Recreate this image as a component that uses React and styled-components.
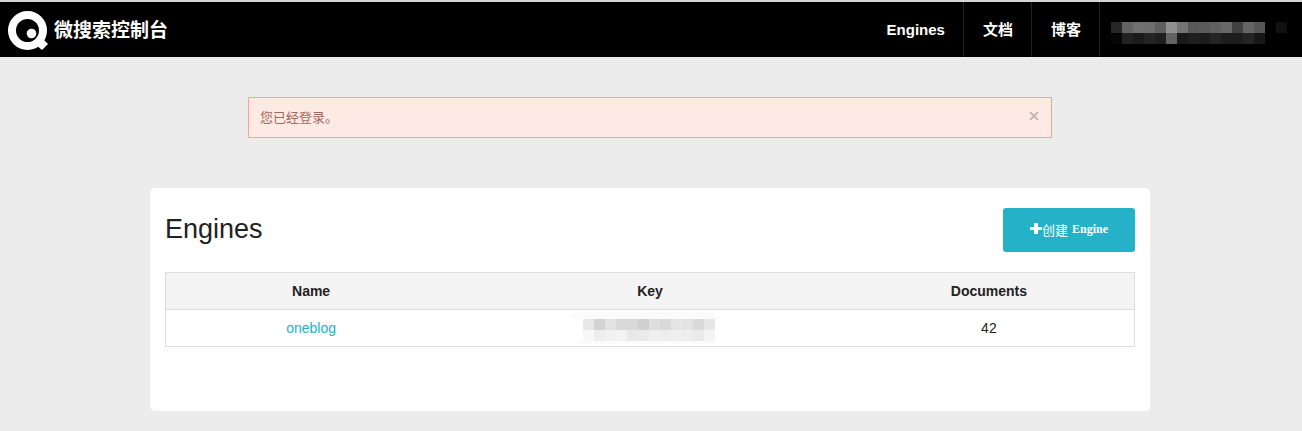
import React from 'react';
import styled, { createGlobalStyle } from 'styled-components';

const GlobalStyle = createGlobalStyle`
  *, *::before, *::after { box-sizing: border-box; }
  body {
    margin: 0;
    background: #ececec;
    color: #222;
    font-family: "Liberation Sans", "Noto Sans CJK SC", sans-serif;
    font-size: 14px;
    line-height: 20px;
  }
`;

const TopBar = styled.header`
  display: flex;
  justify-content: space-between;
  border-top: 2px solid #d4d6d6;
  background: #000;
  color: #fff;
`;

const Brand = styled.a`
  display: flex;
  align-items: center;
  gap: 4px;
  padding: 2px 0 0 8px;
  color: #fff;
  font-size: 19px;
  font-weight: 700;
  text-decoration: none;
`;

const Nav = styled.nav`
  display: flex;
`;

const NavLink = styled.a`
  display: flex;
  align-items: center;
  height: 55px;
  padding: 0 18px 0 19px;
  border-right: 1px solid #222;
  color: #fff;
  font-size: 15px;
  font-weight: 700;
  text-decoration: none;
`;

const Account = styled.div`
  display: flex;
  align-items: center;
  padding: 7px 15px 0 11px;
`;

const Main = styled.main`
  padding: 40px 2px 20px 0;
`;

const Alert = styled.div`
  display: flex;
  justify-content: space-between;
  align-items: center;
  max-width: 804px;
  margin: 0 auto 50px;
  padding: 10px 11px;
  border: 1px solid #f9a592;
  background: #fdeae4;
  color: #a3695b;
  font-size: 13px;
  line-height: 19px;
`;

const CloseButton = styled.button`
  display: flex;
  padding: 0 1px 4px;
  border: 0;
  background: none;
  color: #c6b7b2;
  cursor: pointer;
`;

const Card = styled.section`
  max-width: 1000px;
  margin: 0 auto;
  padding: 20px 15px 64px;
  border-radius: 5px;
  background: #fff;
`;

const CardHeader = styled.div`
  display: flex;
  justify-content: space-between;
  margin-bottom: 20px;
`;

const Title = styled.h1`
  margin: 0;
  font-size: 27px;
  font-weight: 400;
  line-height: 42px;
`;

const CreateButton = styled.button`
  display: flex;
  justify-content: center;
  align-items: center;
  width: 132px;
  height: 44px;
  padding: 0 0 2px;
  border: 0;
  border-radius: 3px;
  background: #25b1c7;
  color: #fff;
  font-family: "Liberation Serif", "Noto Sans CJK SC", serif;
  font-size: 13px;
  cursor: pointer;
`;

const Strong = styled.strong`
  margin-left: 4px;
  font-size: 12px;
`;

const Table = styled.table`
  width: 100%;
  border: 1px solid #ddd;
  border-collapse: collapse;
  table-layout: fixed;
  text-align: center;
`;

const HeadCell = styled.th`
  width: ${({ $width }) => $width};
  height: 37px;
  padding: 0;
  border-bottom: 1px solid #ddd;
  background: #f4f4f4;
`;

const Cell = styled.td`
  height: 37px;
  padding: 0;
`;

const EngineLink = styled.a`
  color: #25b1c7;
  text-decoration: none;
`;

const MosaicSvg = styled.svg`
  display: block;
  margin: 0 auto;
`;

const ACCOUNT_TILES = [
  ['#272727', '#636363', '#707070', '#6e6e6e', '#5f5f5f', '#8f8f8f', '#747474', '#595959', '#5b5b5b', '#616161', '#686868', '#414141', '#656565', '#565656', '#000', '#111'],
  ['#060606', '#222', '#1b1b1b', '#242424', '#1e1e1e', '#626262', '#191919', '#1f1f1f', '#1c1c1c', '#242424', '#1d1d1d', '#1d1d1d', '#242424', '#171717'],
];

const KEY_TILES = [
  ['#e8e8e8', '#d3d3d3', '#e3e3e3', '#d9d9d9', '#d9d9d9', '#d0d0d0', '#dedede', '#d9d9d9', '#e5e5e5', '#e3e3e3', '#dadada', '#e7e7e7'],
  ['#f7f7f7', '#eee', '#f1f1f1', '#f2f2f2', '#e8e8e8', '#eaeaea', '#efefef', '#ededed', '#efefef', '#ededed', '#eaeaea', '#f4f4f4'],
];

function Tiles({ tiles, left = 0, top = 0 }) {
  return tiles.map((row, y) =>
    row.map((fill, x) => (
      <rect key={`${x}-${y}`} x={left + x * 11} y={top + y * 11} width="11" height="11" fill={fill} />
    ))
  );
}

function MaskedAccount() {
  return (
    <MosaicSvg width="176" height="22" role="img" aria-label="Account" shapeRendering="crispEdges">
      <Tiles tiles={ACCOUNT_TILES} />
    </MosaicSvg>
  );
}

function MaskedKey() {
  return (
    <MosaicSvg width="166" height="32" role="img" aria-label="Key" shapeRendering="crispEdges">
      <path d="M0 7 Q6 0 14 0 H141 Q149 0 154 7 Z M5 29 H151 Q147 32 141 32 H16 Q9 32 5 29 Z" fill="#fbfbfb" />
      <Tiles tiles={KEY_TILES} left={16} top={7} />
    </MosaicSvg>
  );
}

function Logo() {
  return (
    <svg width="42" height="40" viewBox="0 0 42 40" aria-hidden="true">
      <circle cx="19.5" cy="19.5" r="15.5" fill="none" stroke="#fff" strokeWidth="8" />
      <path d="M30 28 L35.500 28.500 L40 33 L34 39 L28 34 Z" fill="#fff" />
      <circle cx="23.5" cy="22.5" r="4.8" fill="#fff" />
    </svg>
  );
}

export default function App() {
  return (
    <>
      <GlobalStyle />
      <TopBar>
        <Brand href="#">
          <Logo />
          微搜索控制台
        </Brand>
        <Nav>
          <NavLink href="#engines">Engines</NavLink>
          <NavLink href="#docs">文档</NavLink>
          <NavLink href="#blog">博客</NavLink>
          <Account>
            <MaskedAccount />
          </Account>
        </Nav>
      </TopBar>
      <Main>
        <Alert role="status">
          您已经登录。
          <CloseButton type="button" aria-label="Close">
            <svg width="10" height="10" viewBox="0 0 10 10" stroke="currentColor" strokeWidth="1.8" aria-hidden="true">
              <path d="M1 1 L9 9 M9 1 L1 9" />
            </svg>
          </CloseButton>
        </Alert>
        <Card>
          <CardHeader>
            <Title>Engines</Title>
            <CreateButton type="button">
              <svg width="12" height="12" viewBox="0 0 12 12" fill="currentColor" aria-hidden="true">
                <path d="M4 0h4v4h4v3H8v4H4V7H0V4h4Z" />
              </svg>
              创建<Strong>Engine</Strong>
            </CreateButton>
          </CardHeader>
          <Table>
            <thead>
              <tr>
                <HeadCell $width="30%" scope="col">Name</HeadCell>
                <HeadCell $width="40%" scope="col">Key</HeadCell>
                <HeadCell $width="30%" scope="col">Documents</HeadCell>
              </tr>
            </thead>
            <tbody>
              <tr>
                <Cell><EngineLink href="#oneblog">oneblog</EngineLink></Cell>
                <Cell><MaskedKey /></Cell>
                <Cell>42</Cell>
              </tr>
            </tbody>
          </Table>
        </Card>
      </Main>
    </>
  );
}
